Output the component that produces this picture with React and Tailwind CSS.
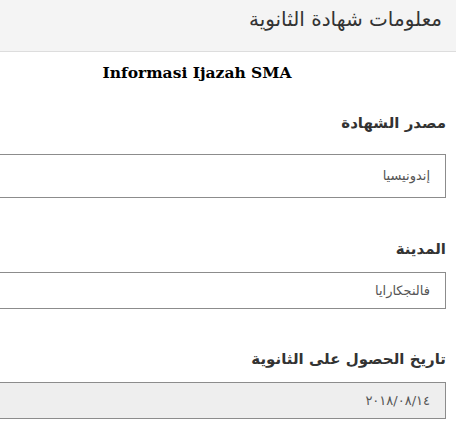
export default function App() {
  const arabic = { fontFamily: '"DejaVu Sans", "Noto Sans", sans-serif' };
  return (
    <div dir="rtl" className="w-[456px] h-[430px] overflow-hidden bg-white" style={arabic}>
      <div className="h-[52px] bg-[#f4f4f4] border-b border-[#dddddd] pr-[14px] pt-[4px]">
        <div className="text-[20px] leading-[30px] text-[#333333]">معلومات شهادة الثانوية</div>
      </div>
      <div className="w-[498px] mr-[10px]">
        <div
          dir="ltr"
          className="text-center text-[15.5px] font-bold leading-[24px] text-black mt-[9px]"
          style={{ fontFamily: '"DejaVu Serif", serif' }}
        >
          Informasi Ijazah SMA
        </div>

        <div className="mt-[26px] text-[15px] font-bold leading-[24px] text-[#333333]">مصدر الشهادة</div>
        <div className="mt-[19px] h-[44px] border border-[#8c8c8c] bg-white flex items-center pr-[15px] text-[13px] text-[#555555]">
          إندونيسيا
        </div>

        <div className="mt-[39px] text-[15px] font-bold leading-[24px] text-[#333333]">المدينة</div>
        <div className="mt-[11px] h-[37px] border border-[#8c8c8c] bg-white flex items-center pr-[15px] text-[13px] text-[#555555]">
          فالنجكارايا
        </div>

        <div className="mt-[38px] text-[15px] font-bold leading-[24px] text-[#333333]">تاريخ الحصول على الثانوية</div>
        <div className="mt-[11px] h-[37px] border border-[#8c8c8c] bg-[#eeeeee] flex items-center pr-[15px] text-[13px] text-[#555555]">
          ٢٠١٨/٠٨/١٤
        </div>
      </div>
    </div>
  );
}
